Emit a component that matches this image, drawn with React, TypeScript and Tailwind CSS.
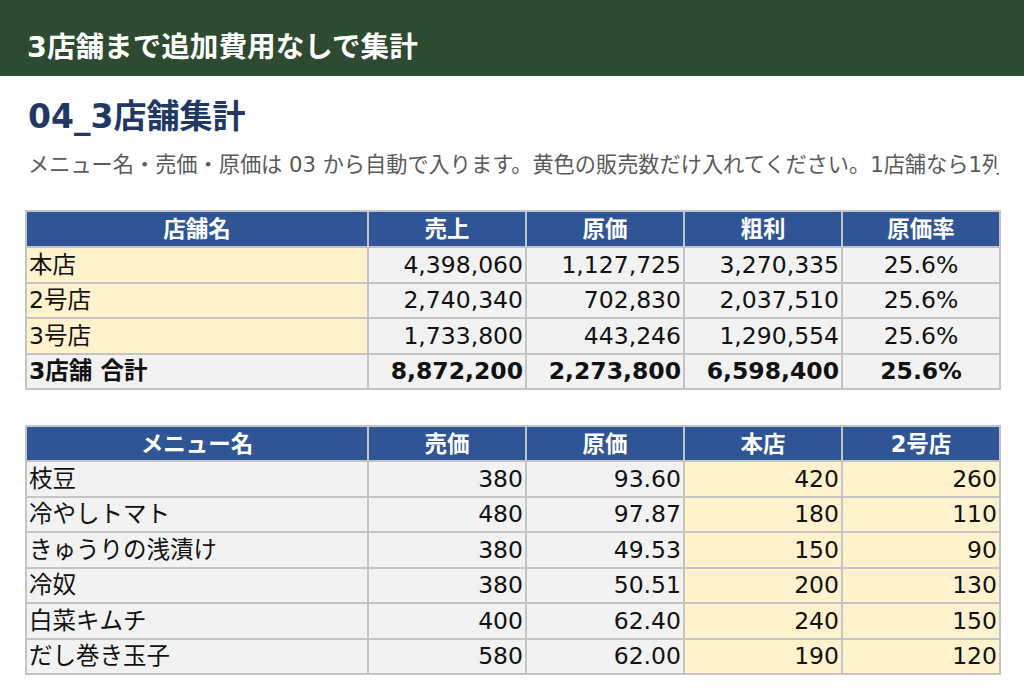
const font = "font-['DejaVu_Sans','Noto_Sans_CJK_JP',sans-serif]"

const stores = [
  { name: "本店", sales: "4,398,060", cost: "1,127,725", profit: "3,270,335", rate: "25.6%" },
  { name: "2号店", sales: "2,740,340", cost: "702,830", profit: "2,037,510", rate: "25.6%" },
  { name: "3号店", sales: "1,733,800", cost: "443,246", profit: "1,290,554", rate: "25.6%" },
]

const menus = [
  { name: "枝豆", price: "380", cost: "93.60", main: "420", second: "260" },
  { name: "冷やしトマト", price: "480", cost: "97.87", main: "180", second: "110" },
  { name: "きゅうりの浅漬け", price: "380", cost: "49.53", main: "150", second: "90" },
  { name: "冷奴", price: "380", cost: "50.51", main: "200", second: "130" },
  { name: "白菜キムチ", price: "400", cost: "62.40", main: "240", second: "150" },
  { name: "だし巻き玉子", price: "580", cost: "62.00", main: "190", second: "120" },
]

const th = "border-2 border-[#c4c4c4] bg-[#2f5597] text-white font-bold text-[22.5px] leading-[30px] text-center p-0"
const cell = "border-2 border-[#c4c4c4] px-[2px] py-0 text-[23.5px] leading-[30px] text-[#111]"
const gray = "bg-[#f2f2f2]"
const yellow = "bg-[#fff2cc]"

function Cols() {
  return (
    <colgroup>
      <col className="w-[342px]" />
      <col className="w-[158px]" />
      <col className="w-[158px]" />
      <col className="w-[158px]" />
      <col className="w-[158px]" />
    </colgroup>
  )
}

export default function App() {
  return (
    <div className={`${font} w-[1024px] h-[698px] overflow-hidden bg-white`}>
      <header className="h-[76px] bg-[#2d4b30] flex items-center pl-[27px] pt-[18px]">
        <h1 className="text-white font-bold text-[28.6px] leading-[40px]">3店舗まで追加費用なしで集計</h1>
      </header>

      <main className="px-[25px] overflow-hidden">
        <h2 className="mt-[19px] pl-[3px] text-[#1f3864] font-bold text-[33px] leading-[44px]">04_3店舗集計</h2>
        <p className="mt-[11px] pl-[3px] text-[#595959] text-[21.2px] leading-[30px] whitespace-nowrap overflow-hidden">
          メニュー名・売価・原価は 03 から自動で入ります。黄色の販売数だけ入れてください。1店舗なら1列目だけ入れれば十分です。
        </p>

        <table className="mt-[30px] table-fixed border-collapse w-[974px]">
          <Cols />
          <thead>
            <tr className="h-[36px]">
              <th className={th}>店舗名</th>
              <th className={th}>売上</th>
              <th className={th}>原価</th>
              <th className={th}>粗利</th>
              <th className={th}>原価率</th>
            </tr>
          </thead>
          <tbody>
            {stores.map((s) => (
              <tr key={s.name} className="h-[35.5px]">
                <td className={`${cell} ${yellow} text-left`}>{s.name}</td>
                <td className={`${cell} ${gray} text-right`}>{s.sales}</td>
                <td className={`${cell} ${gray} text-right`}>{s.cost}</td>
                <td className={`${cell} ${gray} text-right`}>{s.profit}</td>
                <td className={`${cell} ${gray} text-center`}>{s.rate}</td>
              </tr>
            ))}
            <tr className="h-[35.5px] font-bold">
              <td className={`${cell} ${gray} text-left text-[22px]`}>3店舗 合計</td>
              <td className={`${cell} ${gray} text-right`}>8,872,200</td>
              <td className={`${cell} ${gray} text-right`}>2,273,800</td>
              <td className={`${cell} ${gray} text-right`}>6,598,400</td>
              <td className={`${cell} ${gray} text-center`}>25.6%</td>
            </tr>
          </tbody>
        </table>

        <table className="mt-[35px] table-fixed border-collapse w-[974px]">
          <Cols />
          <thead>
            <tr className="h-[35px]">
              <th className={th}>メニュー名</th>
              <th className={th}>売価</th>
              <th className={th}>原価</th>
              <th className={th}>本店</th>
              <th className={th}>2号店</th>
            </tr>
          </thead>
          <tbody>
            {menus.map((m) => (
              <tr key={m.name} className="h-[35.5px]">
                <td className={`${cell} ${gray} text-left`}>{m.name}</td>
                <td className={`${cell} ${gray} text-right`}>{m.price}</td>
                <td className={`${cell} ${gray} text-right`}>{m.cost}</td>
                <td className={`${cell} ${yellow} text-right`}>{m.main}</td>
                <td className={`${cell} ${yellow} text-right`}>{m.second}</td>
              </tr>
            ))}
          </tbody>
        </table>
      </main>
    </div>
  )
}
